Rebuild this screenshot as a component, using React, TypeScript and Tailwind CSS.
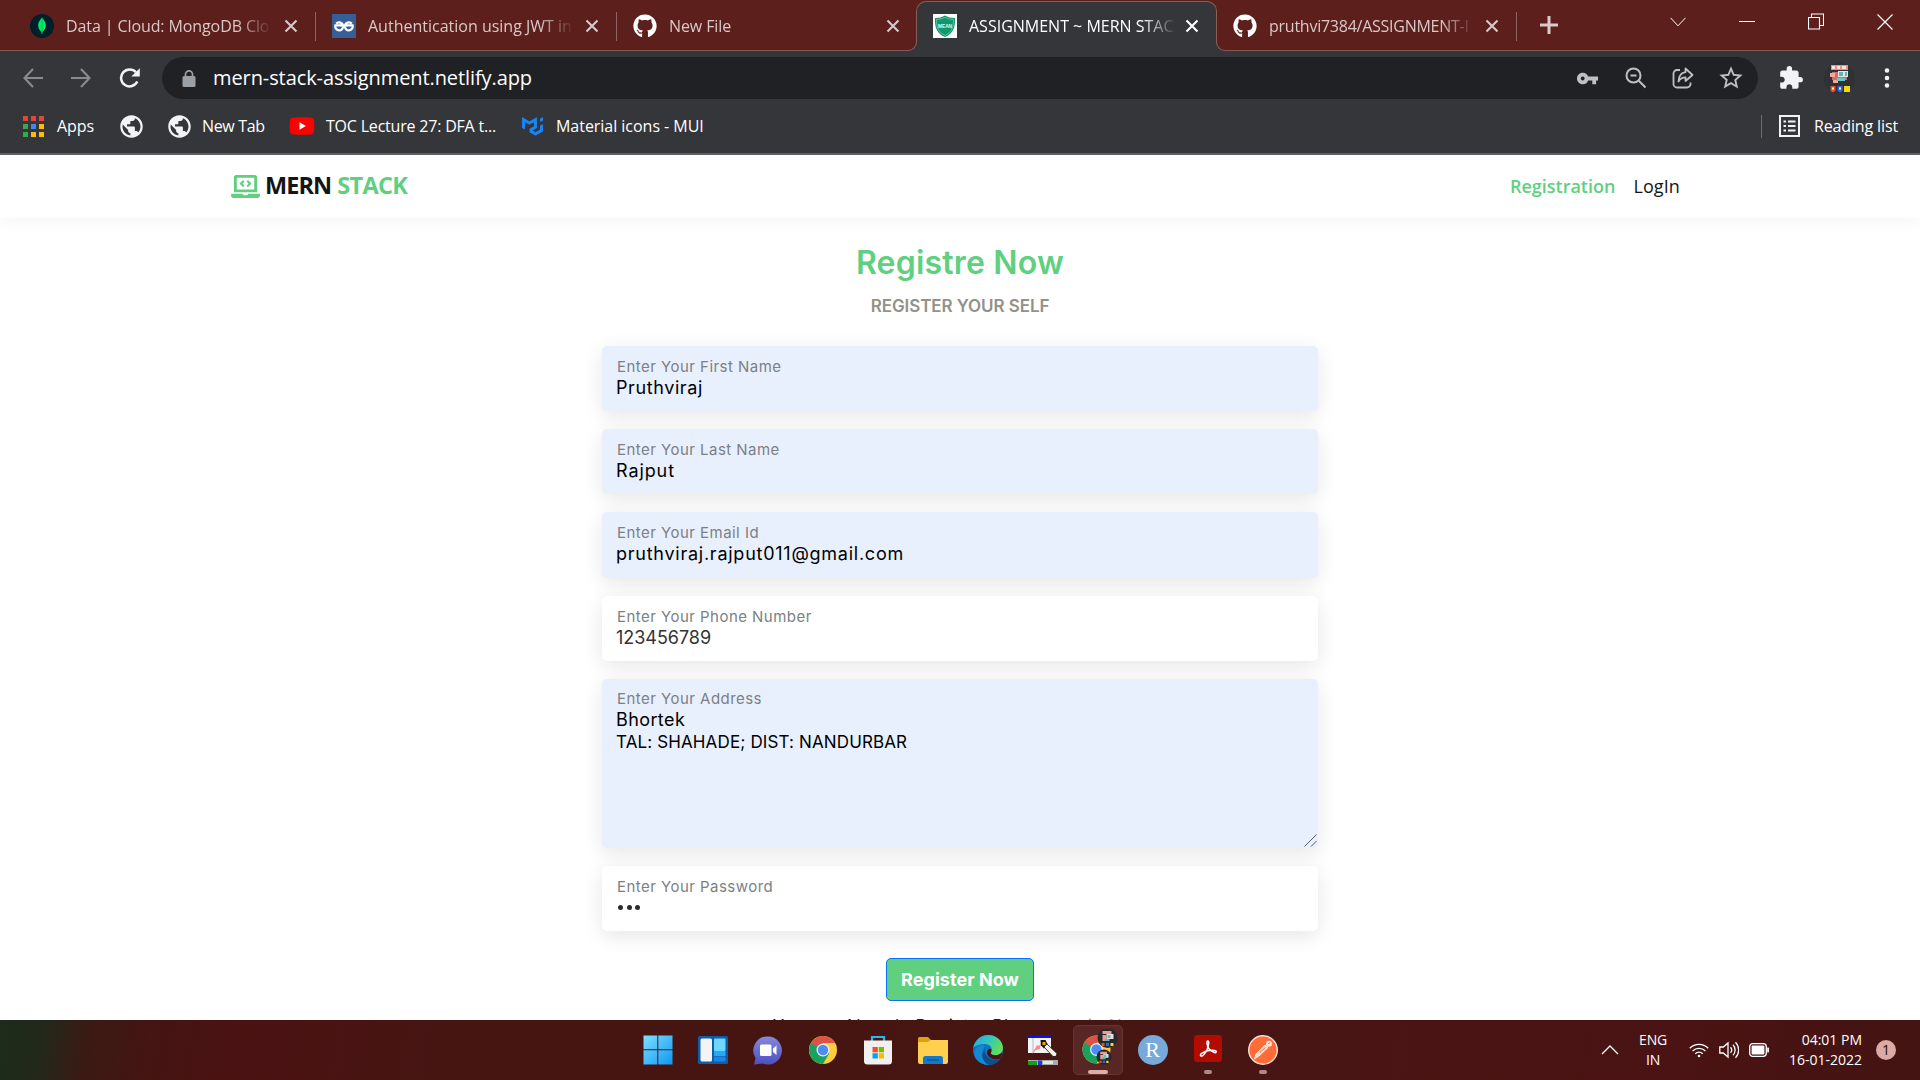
import type { ReactNode } from "react";
import { FaGithub, FaYoutube, FaLaptopCode } from "react-icons/fa";
import { MdVpnKey, MdExtension, MdStarBorder, MdPublic } from "react-icons/md";
import { SiMui } from "react-icons/si";

function MongoIcon() {
  return (
    <svg viewBox="0 0 24 24" className="size-6 shrink-0">
      <circle cx="12" cy="12" r="12" fill="#011e2b" />
      <path d="M12 3.6c.6 1.6 3.8 3.5 3.8 8 0 3.3-1.9 5-3.2 6.2l-.3 2.4h-.6l-.3-2.4c-1.3-1.2-3.2-2.9-3.2-6.2 0-4.5 3.2-6.4 3.8-8z" fill="#00ed64" />
      <path d="M12 5v13" stroke="#00a94a" strokeWidth=".7" />
    </svg>
  );
}

function CodeLoopIcon() {
  return (
    <svg viewBox="0 0 24 24" className="size-6 shrink-0" fill="none" stroke="#fff" strokeWidth="2.3">
      <path d="M0 0h24v24H0z" fill="#355f96" stroke="none" />
      <path d="M4.200 9.600A4 4 0 0 1 11 12a3.900 3.900 0 1 1-7.600-.600H11" />
      <path d="M19.800 9.600A4 4 0 0 0 13 12a3.900 3.900 0 1 0 7.600-.600H13" />
    </svg>
  );
}

function ShieldIcon() {
  return (
    <svg viewBox="0 0 24 24" className="size-6 shrink-0">
      <path d="M0 0h24v24H0z" fill="#fff" />
      <path d="M12 1.500c2.500 1.700 6 2.500 10 2.500.6 9-2 16-10 19C4 20 1.400 13 2 4c4 0 7.500-.8 10-2.500z" fill="#14976a" />
      <path d="M12 3.200c2.300 1.400 5 2.100 8.500 2.200.3 7.600-2 13.300-8.500 16-6.500-2.700-8.800-8.400-8.500-16C7 5.300 9.700 4.600 12 3.200z" fill="none" stroke="#7fd0b3" strokeWidth=".7" />
      <text x="12" y="13.800" textAnchor="middle" fontSize="4.800" fontWeight="700" fill="#d8fff0" fontFamily="Liberation Sans, sans-serif">MEAN</text>
    </svg>
  );
}

function Cross({ bright }: { bright?: boolean }) {
  return (
    <svg viewBox="0 0 14 14" className={bright ? "size-3.5 shrink-0 text-white" : "size-3.5 shrink-0 text-[#d5cbca]"}>
      <path d="M1.500 1.500l11 11M12.500 1.500l-11 11" stroke="currentColor" strokeWidth="2.100" />
    </svg>
  );
}

const fade = "overflow-hidden whitespace-nowrap [mask-image:linear-gradient(to_right,#000_84%,transparent_101%)]";

function Tab({ icon, title, box, gap }: { icon: ReactNode; title: string; box: string; gap?: string }) {
  return (
    <div className={`flex shrink-0 items-center pl-4 text-base text-[#d9c9c8] ${box}`}>
      {icon}
      <span className={`ml-3 w-[204px] ${fade}`}>{title}</span>
      <span className={gap ?? "ml-[13px]"}>
        <Cross />
      </span>
    </div>
  );
}

const divider = "relative after:absolute after:right-0 after:top-3 after:h-[29px] after:w-px after:bg-[#8d6462]";

function TabStrip() {
  return (
    <div className="flex h-[51px] border-b border-[#875553] bg-[#5c1f1c]">
      <Tab icon={<MongoIcon />} title="Data | Cloud: MongoDB Clou" gap="ml-3.5" box={`w-[302px] ml-3.5 h-[51px] tracking-[-0.1px] ${divider}`} />
      <Tab icon={<CodeLoopIcon />} title="Authentication using JWT in" box={`w-[301px] h-[51px] ${divider}`} />
      <Tab icon={<FaGithub className="size-6 text-white" />} title="New File" box="w-[299px] h-[51px] tracking-[-0.1px]" />
      <div className="relative mt-px flex h-[50px] w-[301px] shrink-0 items-center rounded-t-[10px] border border-b-0 border-[#8b5e5c] bg-[#35363a] pb-px pl-4 text-base text-white">
        <span className="absolute -left-[10px] bottom-0 h-[11px] w-[10px] bg-[#35363a]">
          <span className="block size-full rounded-br-[9px] border-b border-r border-[#8b5e5c] bg-[#5c1f1c]" />
        </span>
        <span className="absolute -right-[10px] bottom-0 h-[11px] w-[10px] bg-[#35363a]">
          <span className="block size-full rounded-bl-[9px] border-b border-l border-[#8b5e5c] bg-[#5c1f1c]" />
        </span>
        <ShieldIcon />
        <span className={`ml-3 w-[206px] ${fade}`}>ASSIGNMENT ~ MERN STAC</span>
        <span className="ml-2.5">
          <Cross bright />
        </span>
      </div>
      <Tab icon={<FaGithub className="size-6 text-white" />} title="pruthvi7384/ASSIGNMENT-I" gap="ml-3" box={`w-[300px] h-[51px] tracking-[-0.25px] ${divider}`} />
      <svg viewBox="0 0 20 20" className="ml-[22px] mt-[15px] size-5">
        <path d="M10 1v18M1 10h18" stroke="#d8cccb" strokeWidth="3" />
      </svg>
      <div className="ml-auto mr-[27px] mt-[13px] flex h-[17px] items-center text-white">
        <svg viewBox="0 0 16 10" className="mr-[53px] h-2.5 w-4" fill="none" stroke="currentColor">
          <path d="M.5.800l7.500 8 7.500-8" />
        </svg>
        <span className="mr-[53px] h-px w-4 bg-white" />
        <svg viewBox="0 0 16 17" className="mr-[53px] h-[17px] w-4" fill="none" stroke="currentColor" strokeWidth="1.100">
          <path d="M.5 4.500h11v11.500H.5zM3.500 4.500V1h12v11.500h-4" />
        </svg>
        <svg viewBox="0 0 16 16" className="size-4" fill="none" stroke="currentColor" strokeWidth="1.200">
          <path d="M.5.500l15 15M15.500.500l-15 15" />
        </svg>
      </div>
    </div>
  );
}

function Avatar() {
  return (
    <svg viewBox="0 0 31 31" className="ml-5 size-[31px] shrink-0">
      <circle cx="15.500" cy="15.500" r="15.500" fill="#303135" />
      <path d="M7 2h17v5H7z" fill="#ef8f80" />
      <path d="M8 3h3v3H8zM13 3h3v3h-3zM18 3h4v3h-4z" fill="#fbe3df" />
      <path d="M8 9h15v8H8z" fill="#c9706a" />
      <path d="M14 8h10v6H14z" fill="#e9e3e2" />
      <path d="M15 9h4v4h-4zM21 9h2v4h-2z" fill="#5fb5b8" />
      <path d="M6 10h5v4H6zM9 17h5v3H9z" fill="#f6a59a" />
      <path d="M13 15h8v3h-8z" fill="#69c6c8" />
      <path d="M6.500 23h5v5l-2.500 1.500-2.500-1.500z" fill="#e5512d" />
      <path d="M13.500 23h5v5l-2.500 1.500-2.500-1.500z" fill="#3467d6" />
      <path d="M20 23h6v6h-6z" fill="#f5d90a" />
      <path d="M8 24.500h2v2H8zM15 24.500h2v2h-2z" fill="#fff" />
    </svg>
  );
}

function AddressBar() {
  return (
    <div className="flex h-[54px] items-center">
      <svg viewBox="0 0 20 20" className="ml-[23px] size-5" fill="none" stroke="#8a8b8e" strokeWidth="2.100">
        <path d="M20 10H1.500M10 1L1.500 10l8.500 9" />
      </svg>
      <svg viewBox="0 0 20 20" className="ml-7 size-5" fill="none" stroke="#8a8b8e" strokeWidth="2.100">
        <path d="M0 10h18.500M10 1l8.500 9-8.500 9" />
      </svg>
      <svg viewBox="0 0 22 20" className="ml-7 h-5 w-[22px]" fill="none" stroke="#f1f3f4" strokeWidth="2.500">
        <path d="M18.300 13.500A8.500 8.500 0 1 1 17 4.300" />
        <path d="M20.800.300v8.300h-8.500z" fill="#f1f3f4" stroke="none" />
      </svg>
      <div className="ml-[21px] flex h-[42px] w-[1596px] items-center rounded-full bg-[#202124] text-[#bdc1c6]">
        <svg viewBox="0 0 14 17" className="ml-5 h-[17px] w-3.5">
          <rect x=".5" y="6" width="13" height="11" rx="1.500" fill="#9aa0a6" />
          <path d="M3.500 6.500V4.300a3.500 3.500 0 0 1 7 0v2.200" fill="none" stroke="#9aa0a6" strokeWidth="1.700" />
        </svg>
        <span className="ml-[17px] flex-1 text-xl tracking-[-0.09px] text-white">mern-stack-assignment.netlify.app</span>
        <MdVpnKey className="size-[23px]" />
        <svg viewBox="0 0 22 22" className="ml-[26px] size-[22px]" fill="none" stroke="currentColor" strokeWidth="2">
          <circle cx="8.500" cy="8.500" r="7" />
          <path d="M13.800 13.800l6.700 6.700M5.500 8.500h6" />
        </svg>
        <svg viewBox="0 0 22 22" className="ml-[25px] size-[22px]" fill="none" stroke="currentColor" strokeWidth="1.800">
          <path d="M8 3H5a3.500 3.500 0 0 0-3.500 3.500V17A3.500 3.500 0 0 0 5 20.500h10a3.500 3.500 0 0 0 3.500-3.500v-1.500" />
          <path d="M13.500 1.500l7 6.500-7 6v-3.700c-3 0-5.500 1.300-7 4.200.2-5 2.500-8.700 7-9.300z" strokeLinejoin="round" />
        </svg>
        <MdStarBorder className="ml-[23px] mr-[13px] size-[28px]" />
      </div>
      <MdExtension className="ml-5 size-[26px] text-[#f1f3f4]" />
      <Avatar />
      <svg viewBox="0 0 6 20" className="ml-[29px] h-5 w-1.5" fill="#f1f3f4">
        <circle cx="3" cy="2.500" r="2.300" />
        <circle cx="3" cy="10" r="2.300" />
        <circle cx="3" cy="17.500" r="2.300" />
      </svg>
    </div>
  );
}

const appDots = [
  "bg-[#ea4335]", "bg-[#ea4335]", "bg-[#ea4335]",
  "bg-[#34a853]", "bg-[#4285f4]", "bg-[#fbbc05]",
  "bg-[#34a853]", "bg-[#fbbc05]", "bg-[#fbbc05]",
];

function Globe() {
  return (
    <span className="flex size-[22px] items-center justify-center">
      <MdPublic className="size-[27px] shrink-0 text-[#f1f3f4]" />
    </span>
  );
}

function Bookmarks() {
  return (
    <div className="flex h-[42px] items-center text-base text-white">
      <span className="ml-[23px] grid grid-cols-3 gap-[3px]">
        {appDots.map((c, i) => (
          <span key={i} className={`size-[5px] ${c}`} />
        ))}
      </span>
      <span className="ml-[13px] w-[63px] tracking-[-0.08px]">Apps</span>
      <Globe />
      <span className="ml-[26px]"><Globe /></span>
      <span className="ml-[12px] w-[88px] tracking-[-0.35px]">New Tab</span>
      <span className="relative flex h-[22px] w-[24px] items-center justify-center">
        <FaYoutube className="size-[26px] shrink-0 text-[#ff0000] [background:linear-gradient(#fff,#fff)_center/8px_8px_no-repeat]" />
      </span>
      <span className="ml-3 w-[196px] tracking-[-0.2px]">TOC Lecture 27: DFA t...</span>
      <SiMui className="size-[21px] text-[#1a84f5]" />
      <span className="ml-[13px] tracking-[-0.03px]">Material icons - MUI</span>
      <span className="ml-auto h-[23px] w-px bg-[#6b6c6f]" />
      <svg viewBox="0 0 21 22" className="ml-[17px] h-[22px] w-[21px]" fill="none" stroke="#f1f3f4" strokeWidth="2">
        <path d="M1 1h19v20H1z" />
        <path d="M4.500 6.500h2.500M9 6.500h7.500M4.500 11h2.500M9 11h7.500M4.500 15.500h2.500M9 15.500h7.500" />
      </svg>
      <span className="ml-[14px] mr-[22px] tracking-[-0.13px]">Reading list</span>
    </div>
  );
}

function Field({ label, value, box, className }: { label: string; value: ReactNode; box: string; className?: string }) {
  return (
    <div className={`w-[716px] rounded-[5px] pl-[14px] pt-[11px] shadow-[0_5px_20px_rgba(0,0,0,0.1)] ${box}`}>
      <div className="pl-px text-[15px] leading-5 tracking-[0.46px] text-[#7c7f85]">{label}</div>
      <div className={`-mt-px text-[18px] leading-[23px] ${className ?? ""}`}>{value}</div>
    </div>
  );
}

function Page() {
  return (
    <div className="flex h-[865px] flex-col overflow-hidden bg-white">
      <header className="flex h-[63px] shrink-0 items-center bg-white pb-0.5 pl-[231px] pr-[240px] text-[#151515] shadow-[0_0_18px_rgba(0,0,0,0.06)]">
        <FaLaptopCode className="mt-0.5 size-[29px] text-[#60d080]" />
        <span className="ml-[5px] text-[23.500px] font-bold tracking-[-0.95px] [word-spacing:1px]">
          MERN <span className="tracking-[-0.7px] text-[#60d080]">STACK</span>
        </span>
        <span className="ml-auto text-lg font-semibold text-[#60d080]">Registration</span>
        <span className="ml-[18px] text-lg font-medium tracking-[0.1px]">LogIn</span>
      </header>
      <main className="flex flex-col items-center font-['Inter',sans-serif]">
        <h1 className="mt-[25px] text-[32px] font-semibold leading-10 tracking-[0.2px] text-[#60d080]">Registre Now</h1>
        <h2 className="mt-[13px] text-[17px] font-semibold leading-5 tracking-[-0.08px] text-[#949189]">REGISTER YOUR SELF</h2>
        <form className="mt-[30px] flex flex-col gap-[18px]">
          <Field label="Enter Your First Name" value="Pruthviraj" box="h-[65px] bg-[#e8f0fe]" className="tracking-[0.6px] text-black" />
          <Field label="Enter Your Last Name" value="Rajput" box="h-[65px] bg-[#e8f0fe]" className="tracking-[0.9px] text-black" />
          <Field label="Enter Your Email Id" value="pruthviraj.rajput011@gmail.com" box="h-[66px] bg-[#e8f0fe]" className="tracking-[0.75px] text-black" />
          <Field label="Enter Your Phone Number" value="123456789" box="h-[65px] bg-white" className="tracking-[-0.04px] text-[#333]" />
          <div className="relative h-[169px] w-[716px] rounded-[5px] bg-[#e8f0fe] pl-[14px] pt-2.5 shadow-[0_5px_20px_rgba(0,0,0,0.1)]">
            <div className="pl-px text-[15px] leading-5 tracking-[0.46px] text-[#7c7f85]">Enter Your Address</div>
            <div className="-mt-px leading-[23px] text-black">
              <div className="text-[18px] tracking-[0.4px]">Bhortek</div>
              <div className="text-[17px] tracking-[0.13px]">TAL: SHAHADE; DIST: NANDURBAR</div>
            </div>
            <svg viewBox="0 0 13 13" className="absolute bottom-px right-px size-[13px]" stroke="#555a63">
              <path d="M.5 12.500l12-12M7 12.500l5.500-5.500" />
            </svg>
          </div>
          <Field
            label="Enter Your Password"
            box="h-[65px] bg-white"
            value={
              <span className="flex gap-[3.500px] pl-[2px] pt-[9px]">
                <span className="size-[5px] rounded-full bg-[#2c2c2c]" />
                <span className="size-[5px] rounded-full bg-[#2c2c2c]" />
                <span className="size-[5px] rounded-full bg-[#2c2c2c]" />
              </span>
            }
          />
        </form>
        <button className="mt-[27px] h-[43px] w-[148px] rounded-[5px] border border-[#0d6efd] bg-[#60d080] text-[18px] font-bold tracking-[0.05px] text-white">
          Register Now
        </button>
        <p className="mt-[11px] whitespace-nowrap text-[17px] leading-7 tracking-[0.68px] text-[#222]">
          You are Already Register Please <span className="text-[#60d080]">Login Now</span>
        </p>
      </main>
    </div>
  );
}

function ChromeFace() {
  return (
    <>
      <circle cx="14" cy="14" r="14" fill="#fccd3c" />
      <path d="M14 14L1.900 7A14 14 0 0 1 26.100 7H14z" fill="#de5246" />
      <path d="M14 14L1.900 7A14 14 0 0 0 14 28l6.200-10.500z" fill="#1aa15f" />
      <path d="M1.900 7H14v7z" fill="#de5246" />
      <path d="M1.900 7l6 10.500L14 14z" fill="#1aa15f" />
      <circle cx="14" cy="14" r="6.500" fill="#f1f1f1" />
      <circle cx="14" cy="14" r="5.200" fill="#4c8bf5" />
    </>
  );
}

function TinyBadge() {
  return (
    <>
      <circle r="10" fill="#26282c" />
      <path d="M-5-7h9v3h-9zM-5-3h4v6h-4z" fill="#f09a8c" />
      <path d="M-1-4h7v5h-7z" fill="#e5dedc" />
      <path d="M0-3h3v3H0zM-3 1h5v2h-5z" fill="#63b9bb" />
      <path d="M-6 5h3v3h-3z" fill="#e5512d" />
      <path d="M-1.500 5h3v3h-3z" fill="#3467d6" />
      <path d="M3 5h3v3H3z" fill="#f5d90a" />
    </>
  );
}

const taskIcons: { node: ReactNode; mark?: boolean; active?: boolean }[] = [
  {
    node: (
      <svg viewBox="0 0 30 30" className="size-[30px]">
        <defs>
          <linearGradient id="win" x1="0" y1="0" x2="1" y2="1">
            <stop offset="0" stopColor="#7fe0ff" />
            <stop offset="1" stopColor="#0f96f5" />
          </linearGradient>
        </defs>
        <path d="M.5.500h13.800v13.800H.5zM15.300.500h14.200v13.800H15.300zM.5 15.300h13.800v14.200H.5zM15.300 15.300h14.200v14.200H15.300z" fill="url(#win)" />
      </svg>
    ),
  },
  {
    node: (
      <svg viewBox="0 0 30 28" className="h-7 w-[30px]">
        <rect width="30" height="28" rx="1.500" fill="#0f5ca8" />
        <rect x="2.500" y="2.500" width="11.500" height="23" rx="1.500" fill="#f4f4f4" />
        <rect x="16" y="2.500" width="11.500" height="12.500" rx="1" fill="#6cd8ff" />
        <rect x="16" y="15" width="11.500" height="5" fill="#2aa8f5" />
        <rect x="16" y="20.500" width="11.500" height="5" rx="1" fill="#1b86e8" />
      </svg>
    ),
  },
  {
    node: (
      <svg viewBox="0 0 30 29" className="h-[29px] w-[30px]">
        <defs>
          <linearGradient id="chat" x1="0" y1="0" x2="0" y2="1">
            <stop offset="0" stopColor="#8689d8" />
            <stop offset="1" stopColor="#4b50c2" />
          </linearGradient>
        </defs>
        <path d="M15 .5a14 14 0 1 1-5.500 26.900L1 28.500l1.500-6.500A14 14 0 0 1 15 .5z" fill="url(#chat)" />
        <rect x="7" y="8.500" width="11.500" height="11.500" rx="1.500" fill="#fff" />
        <path d="M20 12.500l3.500-3v9.500l-3.500-3z" fill="#fff" />
      </svg>
    ),
  },
  {
    node: (
      <svg viewBox="0 0 28 28" className="size-7">
        <ChromeFace />
      </svg>
    ),
  },
  {
    node: (
      <svg viewBox="0 0 30 30" className="size-[30px]">
        <path d="M9 7V2h12v5" fill="none" stroke="#2bb7e8" strokeWidth="2.200" />
        <path d="M1 5.500h28V26a3.500 3.500 0 0 1-3.500 3.500h-21A3.500 3.500 0 0 1 1 26z" fill="#f0f0f0" />
        <path d="M9.500 12h5.300v5.300H9.500z" fill="#f25022" />
        <path d="M15.700 12H21v5.300h-5.300z" fill="#7fba00" />
        <path d="M9.500 18.200h5.300v5.300H9.500z" fill="#00a4ef" />
        <path d="M15.700 18.200H21v5.300h-5.300z" fill="#ffb900" />
      </svg>
    ),
  },
  {
    node: (
      <svg viewBox="0 0 30 27" className="h-[27px] w-[30px]">
        <path d="M0 1.500A1.500 1.500 0 0 1 1.500 0H10l3 3v4H0z" fill="#dfa00d" />
        <path d="M0 5h10l2.500-2H30v22a2 2 0 0 1-2 2H2a2 2 0 0 1-2-2z" fill="#ffd04e" />
        <path d="M5 27v-5.500A2.500 2.500 0 0 1 7.500 19h15a2.500 2.500 0 0 1 2.500 2.500V27z" fill="#1579c9" />
        <path d="M9 23h12" stroke="#0b4f91" strokeWidth="1.200" />
      </svg>
    ),
  },
  {
    node: (
      <svg viewBox="0 0 30 30" className="size-[30px]">
        <defs>
          <linearGradient id="edgeTop" x1="0" y1="0" x2="1" y2=".4">
            <stop offset="0" stopColor="#2aa7dc" />
            <stop offset=".5" stopColor="#2fc5c5" />
            <stop offset="1" stopColor="#63dc59" />
          </linearGradient>
        </defs>
        <circle cx="15" cy="15" r="15" fill="#1274bd" />
        <path d="M.300 12.500C2 5 8 0 15 0c9 0 15 6.500 15 13 0 4.500-3.500 7.200-7.500 7.200-3.300 0-5.300-1.300-4.500-2.700 2.500-4.500-1-8.500-6-8.500C6.500 9 2 11 .300 12.500z" fill="url(#edgeTop)" />
        <path d="M11 13c-2.500 6 1 14.500 10 15.700-8 3.500-19-1.200-19.500-10.500C1.500 13 7 9.500 11 10z" fill="#1688d0" />
        <path d="M12 13c-1.500 6 3.500 12 10.500 12 2 0 4-.8 5.500-1.800A15 15 0 0 1 17 30C11 29 6 20 12 13z" fill="#0d4f8e" />
        <path d="M18 17.500c-.8 1.400 1.200 2.700 4.500 2.700 3 0 5.500-1.200 7-3.200a15 15 0 0 1-2 6.200c-6 3.500-14-1-13.500-6.200.2-1.800 2-3.200 3-3.200 1.500 0 1.800 2 1 3.700z" fill="#481412" />
      </svg>
    ),
  },
  {
    node: (
      <svg viewBox="0 0 30 30" className="size-[30px]">
        <path d="M0 0h23v18H0z" fill="#f4f4f8" />
        <path d="M0 0h23v3H0z" fill="#0a12e6" />
        <path d="M5 3v15" stroke="#b9b9c4" />
        <path d="M4 19l5-9 2 1 2-3-1 6-4 1z" fill="#f08c96" />
        <path d="M12.500 5h5l2.500 5-4 3.500-3-3z" fill="#1b1510" />
        <path d="M14.500 7h3v3h-3z" fill="#f9a61c" />
        <path d="M16 12l3-3 10 9.500-1 3h-3z" fill="#f3eee6" stroke="#111" strokeWidth=".8" />
        <path d="M0 25h30v5H0z" fill="#a9a9a9" />
        <path d="M0 26h9v4H0z" fill="#12a012" />
        <path d="M10 25.500h4v4.500h-4z" fill="#2a35e0" />
        <path d="M15 26h10v3H15z" fill="#e3e3e3" />
      </svg>
    ),
  },
  {
    active: true,
    node: (
      <svg viewBox="0 0 38 36" className="-mt-1.5 ml-1 h-9 w-[38px]">
        <g transform="translate(1.500 6.500)">
          <ChromeFace />
        </g>
        <g transform="translate(26.500 9)">
          <TinyBadge />
        </g>
        <g transform="translate(23 28) scale(.75)">
          <TinyBadge />
        </g>
      </svg>
    ),
  },
  {
    node: (
      <span className="flex size-[30px] items-center justify-center rounded-full bg-[#75aadb] font-['Liberation_Serif',serif] text-[22px] leading-none text-white">R</span>
    ),
  },
  {
    mark: true,
    node: (
      <svg viewBox="0 0 28 27" className="-mt-1 h-[27px] w-7">
        <rect width="28" height="27" rx="3.500" fill="#b30b00" />
        <path d="M6.500 20.500c-1-1.800 4.500-4.200 8.500-4.900 4-.6 7.500-.3 7.300 1.300-.4 2-5-.4-7.300-3.200-2-2.600-2.800-7.700-1.200-7.700 1.700 0 .8 5-.8 8.700-1.700 3.700-5 8-6.500 5.800z" fill="none" stroke="#fff" strokeWidth="1.500" />
      </svg>
    ),
  },
  {
    mark: true,
    node: (
      <svg viewBox="0 0 30 30" className="size-[30px]">
        <circle cx="15" cy="15" r="14.300" fill="#ff6c37" stroke="#f7e2d8" strokeWidth="1.400" />
        <path d="M8 19l9-9 3 2.500-8.500 8L6.500 24z" fill="#ffd9c7" stroke="#fff" strokeWidth=".8" />
        <path d="M12 17.500l5.500-5" stroke="#ff6c37" strokeWidth=".9" />
        <circle cx="21" cy="8.800" r="3" fill="#ffe6da" />
        <path d="M20 8.800l2.300-1" stroke="#ff6c37" strokeWidth=".9" />
      </svg>
    ),
  },
];

function Taskbar() {
  return (
    <div className="flex h-[60px] items-center bg-[linear-gradient(100deg,#1d2d1a_0px,#22281a_45px,#3b1a13_90px,#441512_150px,#4b1212_240px,#461512_440px,#461512_800px,#481513_1200px,#4b1313_1660px,#421412_1920px)] pl-[630px] text-white">
      {taskIcons.map((t, i) => (
        <div key={i} className="flex h-[60px] w-[55px] items-center justify-center">
          <div className={t.active ? "relative flex h-[50px] w-[50px] items-center justify-center rounded-[5px] border border-[#653533] bg-[#582624]" : "relative flex h-[50px] w-[50px] items-center justify-center"}>
            {t.node}
            {t.active && <span className="absolute bottom-0 h-1 w-5 rounded-full bg-[#dcaea9]" />}
            {t.mark && <span className="absolute bottom-px h-1 w-2 rounded-full bg-[#a98b8a]" />}
          </div>
        </div>
      ))}
      <svg viewBox="0 0 18 10" className="ml-auto h-2.5 w-[18px]" fill="none" stroke="#fff" strokeWidth="1.300">
        <path d="M1 9l8-8 8 8" />
      </svg>
      <div className="ml-5 w-7 text-center text-sm leading-5 tracking-[-0.2px]">
        ENG
        <br />
        IN
      </div>
      <svg viewBox="0 0 20 16" className="ml-[22px] h-4 w-5" fill="none" stroke="#fff" strokeWidth="1.400">
        <path d="M.800 6.200a13 13 0 0 1 18.400 0M3.600 9a9 9 0 0 1 12.800 0M6.300 11.700a5.200 5.200 0 0 1 7.400 0" />
        <circle cx="10" cy="14" r="1.300" fill="#fff" stroke="none" />
      </svg>
      <svg viewBox="0 0 20 18" className="ml-2.5 h-[18px] w-5" fill="none" stroke="#fff" strokeWidth="1.300">
        <path d="M.8 6v6h3.500l4.700 4V2L4.300 6zM11.500 6.300a4 4 0 0 1 0 5.400M14 3.800a7.500 7.500 0 0 1 0 10.400M16.500 1.300a11 11 0 0 1 0 15.400" />
      </svg>
      <svg viewBox="0 0 20 14" className="ml-2.5 h-3.5 w-5">
        <rect x=".7" y=".7" width="16.600" height="12.600" rx="3" fill="none" stroke="#fff" strokeWidth="1.300" />
        <rect x="2.600" y="2.600" width="12.800" height="8.800" rx="1" fill="#fff" />
        <path d="M18.200 4.500h1a.8.8 0 0 1 .8.800v3.400a.8.8 0 0 1-.8.800h-1z" fill="#fff" />
      </svg>
      <div className="ml-[18px] w-[75px] whitespace-nowrap text-right text-sm leading-5">
        04:01 PM
        <br />
        16-01-2022
      </div>
      <span className="ml-[14px] mr-6 flex size-5 items-center justify-center rounded-full bg-[#dcaaa5] text-sm text-[#2a0d0c]">1</span>
    </div>
  );
}

export default function App() {
  return (
    <div className="h-[1080px] w-[1920px] overflow-hidden font-['Open_Sans',sans-serif]">
      <div className="h-[155px] border-b-2 border-[#5f6063] bg-[#35363a]">
        <TabStrip />
        <AddressBar />
        <Bookmarks />
      </div>
      <Page />
      <Taskbar />
    </div>
  );
}
